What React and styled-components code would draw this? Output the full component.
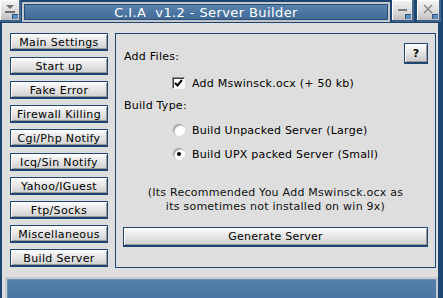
import styled, { createGlobalStyle } from "styled-components";

const GlobalStyle = createGlobalStyle`
	html, body {
		margin: 0;
		padding: 0;
		background: #1d4673;
	}
	* {
		box-sizing: border-box;
	}
`;

const menuItems = [
	"Main Settings",
	"Start up",
	"Fake Error",
	"Firewall Killing",
	"Cgi/Php Notify",
	"Icq/Sin Notify",
	"Yahoo/IGuest",
	"Ftp/Socks",
	"Miscellaneous",
	"Build Server",
];

export default function App() {
	return (
		<Window>
			<GlobalStyle />
			<TitleRow>
				<CapButton $width={21}>
					<svg width="12" height="10" viewBox="0 0 12 10">
						<path d="M2 1 H10 L6 5 Z" fill="#6f6f6f" />
						<rect x="1" y="7" width="10" height="2" fill="#6f6f6f" />
					</svg>
				</CapButton>
				<TitleBar>C.I.A&nbsp;&nbsp;v1.2 - Server Builder</TitleBar>
				<CapButton $width={22} $gap={2}>
					<svg width="12" height="10" viewBox="0 0 12 10">
						<rect x="2" y="5" width="9" height="2" fill="#7d7d7d" />
					</svg>
				</CapButton>
				<CapButton $width={24} $gap={3}>
					<svg width="12" height="10" viewBox="0 0 12 10">
						<path d="M2 1 L10 9 M10 1 L2 9" stroke="#8a8a8a" strokeWidth="1.6" />
					</svg>
				</CapButton>
			</TitleRow>
			<Content>
				<Main>
					<Sidebar>
						{menuItems.map((item) => (
							<SideButton key={item}>{item}</SideButton>
						))}
					</Sidebar>
					<Panel>
						<PanelHeader>
							<Label>Add Files:</Label>
							<HelpButton>?</HelpButton>
						</PanelHeader>
						<OptionRow $top={7}>
							<CheckBox>
								<svg width="9" height="8" viewBox="0 0 9 8">
									<path d="M1 4 L3.5 6.5 L8 1" stroke="#000" strokeWidth="2" fill="none" />
								</svg>
							</CheckBox>
							<span>Add Mswinsck.ocx (+ 50 kb)</span>
						</OptionRow>
						<Label $top={4}>Build Type:</Label>
						<OptionRow $top={5}>
							<Radio />
							<span>Build Unpacked Server (Large)</span>
						</OptionRow>
						<OptionRow>
							<Radio $checked />
							<span>Build UPX packed Server (Small)</span>
						</OptionRow>
						<Note>
							(Its Recommended You Add Mswinsck.ocx as
							<br />
							its sometimes not installed on win 9x)
						</Note>
						<WideButton>Generate Server</WideButton>
					</Panel>
				</Main>
				<StatusBar />
			</Content>
		</Window>
	);
}

const Window = styled.div`
	width: 443px;
	height: 298px;
	display: flex;
	flex-direction: column;
	background: #1d4673;
	font-family: "DejaVu Sans", Verdana, sans-serif;
	font-size: 11px;
	letter-spacing: 0.25px;
	color: #000;
	overflow: hidden;
`;

const TitleRow = styled.div`
	display: flex;
	align-items: flex-start;
	height: 23px;
	padding-right: 2px;
`;

const CapButton = styled.div`
	position: relative;
	width: ${(p) => p.$width}px;
	height: 22px;
	margin-left: ${(p) => p.$gap || 0}px;
	display: flex;
	align-items: center;
	justify-content: center;
	padding-bottom: 3px;
	background: linear-gradient(#f4f4f4, #dcdcdc 55%, #bfbfbf);
	border-right: 2px solid #4a6a8c;
	border-bottom: 2px solid #3b5f86;
	box-shadow: inset 1px 1px #ffffff;

	&::after {
		content: "";
		position: absolute;
		right: 1px;
		bottom: 1px;
		width: 5px;
		height: 4px;
		background: #5d8bbd;
		border-top: 1px solid #2f5782;
		border-left: 1px solid #2f5782;
	}
`;

const TitleBar = styled.div`
	flex: 1;
	height: 20px;
	margin: 2px 0 0 1px;
	display: flex;
	align-items: center;
	justify-content: center;
	border: 2px solid #c2c7cd;
	box-shadow: inset 0 0 0 1px #2a4d76;
	background: linear-gradient(#5b84af, #4a74a0 60%, #426b97);
	color: #ffffff;
	font-size: 13px;
	letter-spacing: 0.4px;
	padding-top: 1px;
`;

const Content = styled.div`
	flex: 1;
	display: flex;
	flex-direction: column;
	margin: 0 5px 0 2px;
	background: #dedede;
`;

const Main = styled.div`
	display: flex;
	gap: 7px;
	padding: 10px 2px 0 8px;
`;

const Sidebar = styled.div`
	display: flex;
	flex-direction: column;
	gap: 6px;
	width: 98px;
`;

const SideButton = styled.div`
	height: 18px;
	display: flex;
	align-items: center;
	justify-content: center;
	border: 1px solid #1d4673;
	border-bottom-width: 2px;
	background: linear-gradient(#ffffff, #ececec 35%, #cfcfcf);
	box-shadow: inset 1px 1px #ffffff, inset -1px -1px #9a9a9a;
	white-space: nowrap;
	letter-spacing: 0.35px;
	padding-top: 1px;
`;

const Panel = styled.div`
	flex: 1;
	height: 235px;
	border: 1px solid #1d4673;
	padding: 0 7px 19px 7px;
	display: flex;
	flex-direction: column;
`;

const PanelHeader = styled.div`
	display: flex;
	align-items: flex-end;
	justify-content: space-between;
	padding-top: 9px;
`;

const Label = styled.div`
	line-height: 14px;
	padding-left: 1px;
	margin-top: ${(p) => p.$top || 0}px;
`;

const HelpButton = styled.div`
	width: 24px;
	height: 21px;
	display: flex;
	align-items: center;
	justify-content: center;
	font-weight: bold;
	font-size: 11px;
	border: 1px solid #1d4673;
	border-bottom-width: 2px;
	background: linear-gradient(#ffffff, #e8e8e8 40%, #c9c9c9);
	box-shadow: inset 1px 1px #ffffff, inset -1px -1px #9a9a9a;
`;

const OptionRow = styled.div`
	height: 24px;
	margin-top: ${(p) => p.$top || 0}px;
	padding-left: 49px;
	display: flex;
	align-items: center;
	gap: 7px;
`;

const CheckBox = styled.span`
	width: 13px;
	height: 12px;
	display: flex;
	align-items: center;
	justify-content: center;
	background: #ffffff;
	border-top: 1px solid #8a8a8a;
	border-left: 1px solid #8a8a8a;
	border-right: 1px solid #f4f4f4;
	border-bottom: 1px solid #f4f4f4;
	box-shadow: inset 1px 1px #404040;
`;

const Radio = styled.span`
	width: 12px;
	height: 12px;
	margin-left: 1px;
	border-radius: 50%;
	background: #ffffff;
	box-shadow: inset 1px 1px #9a9a9a, inset 2px 2px #d4d4d4;
	display: flex;
	align-items: center;
	justify-content: center;

	&::after {
		content: "";
		width: 4px;
		height: 4px;
		border-radius: 50%;
		background: ${(p) => (p.$checked ? "#000" : "transparent")};
	}
`;

const Note = styled.div`
	margin-top: 20px;
	text-align: center;
	line-height: 14px;
	color: #111;
`;

const WideButton = styled.div`
	margin-top: 13px;
	height: 20px;
	display: flex;
	align-items: center;
	justify-content: center;
	border: 1px solid #1d4673;
	border-bottom-width: 2px;
	background: linear-gradient(#ffffff, #ececec 35%, #cfcfcf);
	box-shadow: inset 1px 1px #ffffff, inset -1px -1px #9a9a9a;
`;

const StatusBar = styled.div`
	margin: auto 0 0 3px;
	height: 21px;
	border: 2px solid #c6cbd1;
	border-bottom: none;
	box-shadow: inset 1px 1px #6d8eb1;
	background: linear-gradient(#5680ac, #4b75a2);
`;
